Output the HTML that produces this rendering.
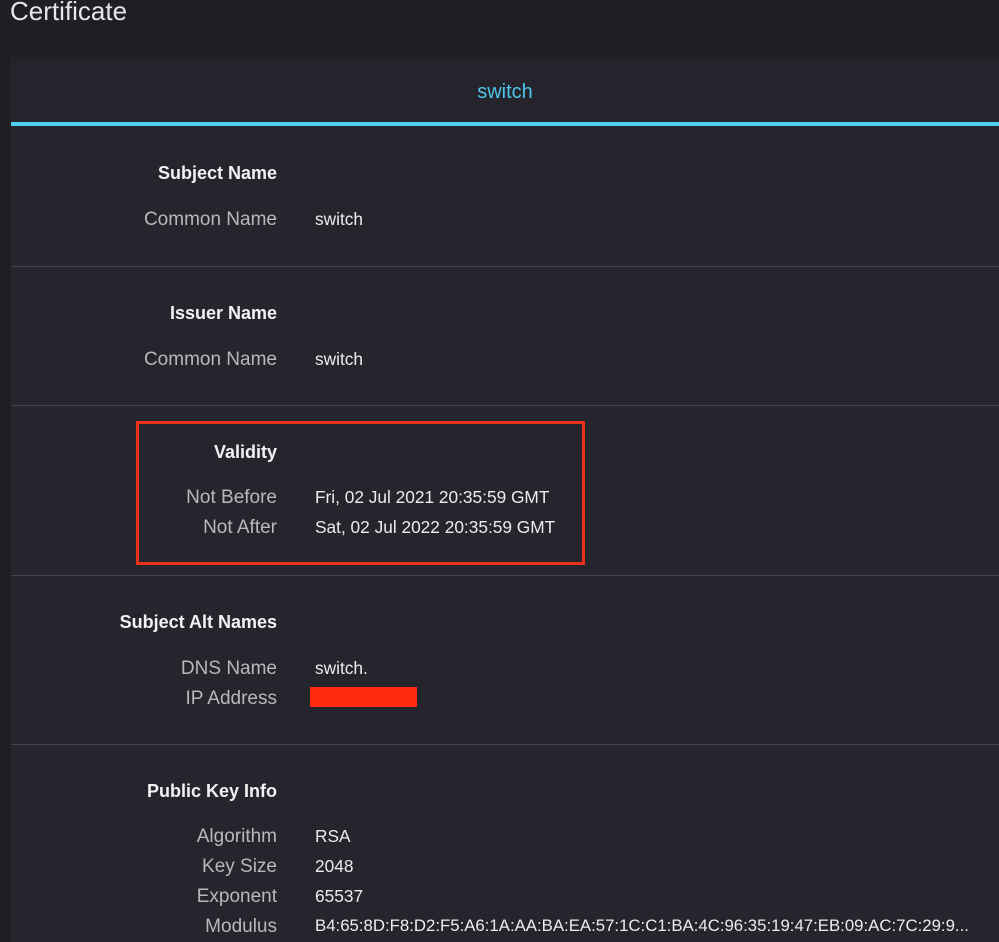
<!DOCTYPE html>
<html><head><meta charset="utf-8"><style>
body{margin:0;width:999px;height:942px;background:#1f1e24;overflow:hidden;font-family:"Liberation Sans",sans-serif;position:relative}
.t{position:absolute;left:10px;top:-4px;font-size:26px;color:#e6e6e6}
.p{position:absolute;left:11px;top:57px;width:988px;height:885px;background:#26252e}
.tab{position:absolute;left:11px;top:57px;width:988px;height:66px;background:#25242c;text-align:center;color:#4fc6e8;font-size:20px;line-height:70px}
.cy{position:absolute;left:11px;top:122px;width:988px;height:4px;background:#4fd0ee}
.d{position:absolute;left:11px;width:988px;height:1px;background:#45444c}
.l,.h,.v{position:absolute;font-size:18px;line-height:22px;white-space:nowrap}
.l,.h{right:722px;text-align:right}
.l{color:#b8b8bc;font-size:19px;margin-top:1px}
.h{color:#f2f2f2;font-weight:bold;font-size:18px}
.v{left:315px;color:#ececec;font-size:17.3px}
</style></head><body>
<div class="t">Certificate</div>
<div class="p"></div>
<div class="tab">switch</div>
<div class="cy"></div>
<div class="d" style="top:266px"></div>
<div class="d" style="top:405px"></div>
<div class="d" style="top:575px"></div>
<div class="d" style="top:744px"></div>

<div class="h" style="top:162px">Subject Name</div>
<div class="l" style="top:208px">Common Name</div><div class="v" style="top:208px">switch</div>

<div class="h" style="top:302px">Issuer Name</div>
<div class="l" style="top:348px">Common Name</div><div class="v" style="top:348px">switch</div>

<div class="h" style="top:441px">Validity</div>
<div class="l" style="top:486px">Not Before</div><div class="v" style="top:486px">Fri, 02 Jul 2021 20:35:59 GMT</div>
<div class="l" style="top:516px">Not After</div><div class="v" style="top:516px">Sat, 02 Jul 2022 20:35:59 GMT</div>
<div style="position:absolute;left:136px;top:421px;width:443px;height:138px;border:3px solid #e8321e"></div>

<div class="h" style="top:611px">Subject Alt Names</div>
<div class="l" style="top:657px">DNS Name</div><div class="v" style="top:657px">switch.</div>
<div class="l" style="top:687px">IP Address</div>
<div style="position:absolute;left:310px;top:687px;width:107px;height:20px;background:#ff2a10"></div>

<div class="h" style="top:780px">Public Key Info</div>
<div class="l" style="top:825px">Algorithm</div><div class="v" style="top:825px">RSA</div>
<div class="l" style="top:855px">Key Size</div><div class="v" style="top:855px">2048</div>
<div class="l" style="top:885px">Exponent</div><div class="v" style="top:885px">65537</div>
<div class="l" style="top:915px">Modulus</div><div class="v" style="top:915px;font-size:16.8px">B4:65:8D:F8:D2:F5:A6:1A:AA:BA:EA:57:1C:C1:BA:4C:96:35:19:47:EB:09:AC:7C:29:9...</div>
</body></html>
